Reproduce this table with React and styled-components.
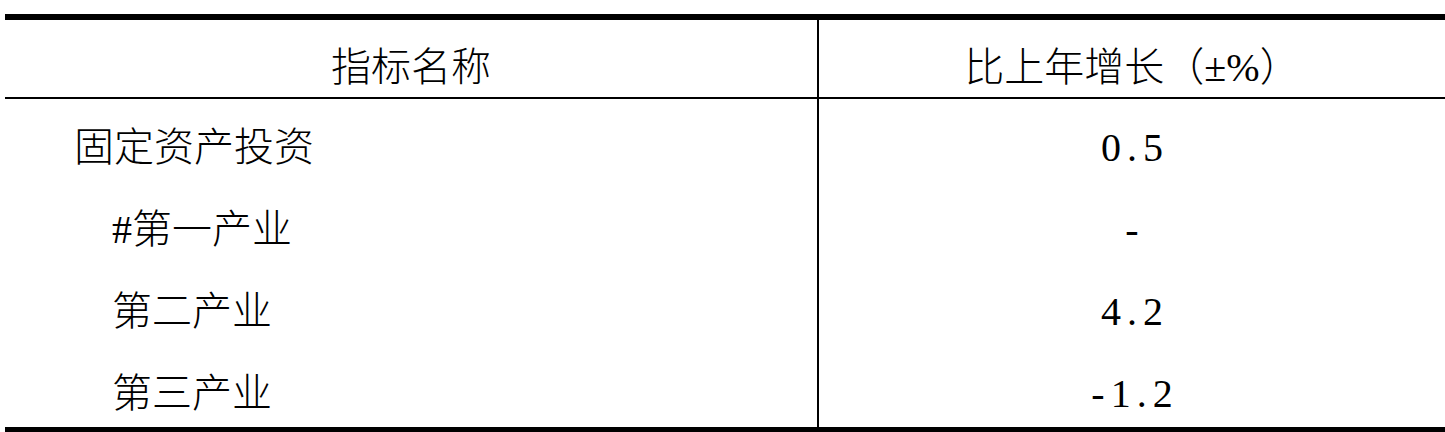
import styled, { createGlobalStyle } from "styled-components";

const GlobalStyle = createGlobalStyle`
  html, body {
    margin: 0;
    padding: 0;
    background: #ffffff;
  }
  body {
    font-family: "Liberation Serif", "Noto Sans CJK SC", serif;
    color: #000000;
  }
`;

export const Page = styled.div`
  width: 1445px;
  height: 432px;
  overflow: hidden;
  padding: 14px 0 0 5px;
  box-sizing: border-box;
`;

export const StatTable = styled.table`
  width: 1440px;
  border-collapse: separate;
  border-spacing: 0;
  border-top: 6px solid #000;
  border-bottom: 6px solid #000;
  table-layout: fixed;
  font-family: "Liberation Serif", "Noto Sans CJK SC", serif;
`;

export const HeadCell = styled.th`
  box-sizing: border-box;
  height: 79px;
  padding: 28px 0 9px;
  font-size: 40px;
  line-height: 40px;
  font-weight: 300;
  text-align: center;
  vertical-align: top;
  border-bottom: 2px solid #000;
  border-right: ${(p) => (p.$divider ? "2px solid #000" : "none")};
  width: ${(p) => (p.$divider ? "814px" : "auto")};
`;

export const NameCell = styled.td`
  box-sizing: border-box;
  height: 82px;
  padding: 29px 0 13px ${(p) => (p.$indent ? "107px" : "69px")};
  font-size: 40px;
  line-height: 40px;
  font-weight: 300;
  text-align: left;
  vertical-align: top;
  border-right: 2px solid #000;
  white-space: pre;
`;

export const ValueCell = styled.td`
  box-sizing: border-box;
  height: 82px;
  padding: 29px 0 13px;
  font-family: "Liberation Serif", serif;
  font-size: 40px;
  line-height: 40px;
  font-weight: 400;
  text-align: center;
  vertical-align: top;
  letter-spacing: 6px;
  text-indent: 6px;
`;

const rows = [
  { name: "固定资产投资", value: "0.5" },
  { name: "#第一产业", value: "-", indent: true },
  { name: "第二产业", value: "4.2", indent: true },
  { name: "第三产业", value: "-1.2", indent: true },
];

const App = () => {
  return (
    <Page>
      <GlobalStyle />
      <StatTable>
        <thead>
          <tr>
            <HeadCell $divider>指标名称</HeadCell>
            <HeadCell>比上年增长（±%）</HeadCell>
          </tr>
        </thead>
        <tbody>
          {rows.map((row) => (
            <tr key={row.name}>
              <NameCell $indent={row.indent}>{row.name}</NameCell>
              <ValueCell>{row.value}</ValueCell>
            </tr>
          ))}
        </tbody>
      </StatTable>
    </Page>
  );
};

export default App;
